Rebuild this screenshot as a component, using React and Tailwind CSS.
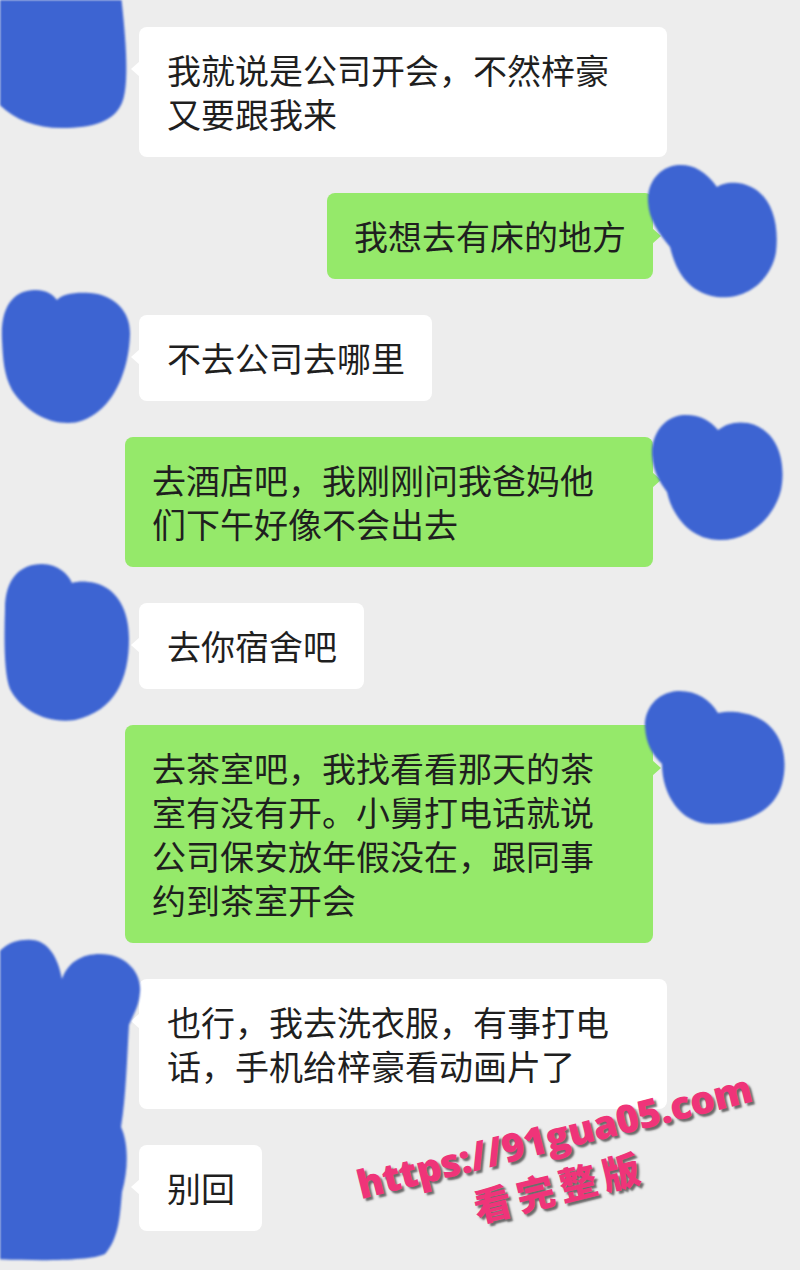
import React from "react";

const BLUE = "#3d64d2";

function Blob({ className, viewBox, w, h, d }) {
  return (
    <svg
      className={"absolute pointer-events-none blur-[1px] " + className}
      width={w}
      height={h}
      viewBox={viewBox}
      fill={BLUE}
    >
      <path d={d} />
    </svg>
  );
}

function LeftRow({ width = "", children, avatar }) {
  return (
    <div className="relative flex pl-[139px]">
      <div className={"relative rounded-[8px] bg-white py-[21px] pl-[28px] pr-[27px] " + width}>
        <span className="absolute -left-[8px] top-[34px] h-0 w-0 border-y-[8px] border-r-[9px] border-y-transparent border-r-white" />
        {children}
      </div>
      {avatar}
    </div>
  );
}

function RightRow({ width = "", children, avatar }) {
  return (
    <div className="relative flex justify-end pr-[147px]">
      <div className={"relative rounded-[8px] bg-[#95e96a] py-[21px] pl-[27px] pr-[27px] " + width}>
        <span className="absolute -right-[8px] top-[35px] h-0 w-0 border-y-[8px] border-l-[9px] border-y-transparent border-l-[#95e96a]" />
        {children}
      </div>
      {avatar}
    </div>
  );
}

function L({ children }) {
  return <span className="block whitespace-nowrap">{children}</span>;
}

export default function App() {
  return (
    <div className="relative flex h-[1270px] w-[800px] flex-col gap-[36px] overflow-hidden bg-[#ededed] pt-[27px] font-['Noto_Sans_CJK_SC','Noto_Sans',sans-serif] text-[34px] leading-[44px] text-[#1f1f1f]">
      <LeftRow
        width="w-[528px]"
        avatar={
          <Blob
            className="left-0 -top-[27px]"
            w={150}
            h={150}
            viewBox="0 0 150 150"
            d="M-5,-5 H121 C126,40 129,80 123,100 C116,122 92,128 62,128 C32,128 10,117 -5,100 Z"
          />
        }
      >
        <L>我就说是公司开会，不然梓豪</L>
        <L>又要跟我来</L>
      </LeftRow>

      <RightRow
        avatar={
          <Blob
            className="left-[630px] -top-[41px]"
            w={170}
            h={160}
            viewBox="630 150 170 160"
            d="M717,185 C705,168 692,162 678,163 C658,165 647,182 648,200 C649,218 658,230 670,245 C675,265 685,290 717,295 C750,298 772,275 776,250 C780,215 768,185 738,181 C728,180 722,182 717,185 Z"
          />
        }
      >
        <L>我想去有床的地方</L>
      </RightRow>

      <LeftRow
        avatar={
          <Blob
            className="left-0 -top-[45px]"
            w={160}
            h={170}
            viewBox="0 270 160 170"
            d="M2,340 C0,305 15,290 35,290 C48,290 54,296 57,300 C62,294 75,292 90,293 C115,295 131,312 130,335 C129,365 118,395 100,410 C88,420 78,423 68,423 C45,423 25,410 12,390 C4,375 3,360 2,340 Z"
          />
        }
      >
        <L>不去公司去哪里</L>
      </LeftRow>

      <RightRow
        width="w-[528px]"
        avatar={
          <Blob
            className="left-[630px] -top-[37px]"
            w={170}
            h={160}
            viewBox="630 400 170 160"
            d="M718,430 C710,420 698,414 683,415 C662,417 651,437 652,455 C653,472 660,482 667,492 C672,515 690,540 720,540 C752,540 775,515 781,490 C786,465 780,430 748,423 C735,421 726,424 718,430 Z"
          />
        }
      >
        <L>去酒店吧，我刚刚问我爸妈他</L>
        <L>们下午好像不会出去</L>
      </RightRow>

      <LeftRow
        avatar={
          <Blob
            className="left-0 -top-[54px]"
            w={160}
            h={190}
            viewBox="0 550 160 190"
            d="M5,610 C5,580 20,565 42,565 C58,565 68,575 72,584 C78,582 86,582 95,584 C118,590 129,612 129,640 C129,680 115,712 75,721 C45,725 20,710 10,690 C4,675 4,640 5,610 Z"
          />
        }
      >
        <L>去你宿舍吧</L>
      </LeftRow>

      <RightRow
        width="w-[528px]"
        avatar={
          <Blob
            className="left-[630px] -top-[46px]"
            w={170}
            h={160}
            viewBox="630 680 170 160"
            d="M718,714 C710,700 695,691 677,692 C655,694 644,712 645,728 C646,745 652,755 662,765 C662,795 680,825 712,825 C750,825 775,810 782,785 C790,755 780,720 742,714 C732,712 725,713 718,714 Z"
          />
        }
      >
        <L>去茶室吧，我找看看那天的茶</L>
        <L>室有没有开。小舅打电话就说</L>
        <L>公司保安放年假没在，跟同事</L>
        <L>约到茶室开会</L>
      </RightRow>

      <LeftRow
        width="w-[528px]"
        avatar={
          <Blob
            className="left-0 -top-[52px]"
            w={160}
            h={340}
            viewBox="0 930 160 340"
            d="M-5,960 C5,945 20,942 32,943 C48,944 58,960 62,982 C68,965 82,957 100,957 C125,957 142,975 140,995 C139,1010 133,1018 129,1028 C127,1060 126,1100 121,1130 C128,1145 129,1170 122,1195 C120,1215 120,1240 105,1257 C90,1264 40,1264 -5,1262 Z"
          />
        }
      >
        <L>也行，我去洗衣服，有事打电</L>
        <L>话，手机给梓豪看动画片了</L>
      </LeftRow>

      <LeftRow>
        <L>别回</L>
      </LeftRow>

      <div className="absolute left-[560px] top-[1160px] flex -translate-x-1/2 -translate-y-1/2 -rotate-[14deg] flex-col items-center font-bold text-[#ef3479] [text-shadow:2px_3px_2px_rgba(50,50,50,0.7)]">
        <div className="whitespace-nowrap font-['Open_Sans',sans-serif] text-[39px] font-extrabold leading-[44px] tracking-[-0.5px]">
          https://91gua05.com
        </div>
        <div className="-ml-[14px] mt-[6px] whitespace-nowrap font-['Noto_Sans_CJK_SC',sans-serif] text-[38px] font-black leading-[44px] tracking-[6px]">
          看完整版
        </div>
      </div>
    </div>
  );
}
